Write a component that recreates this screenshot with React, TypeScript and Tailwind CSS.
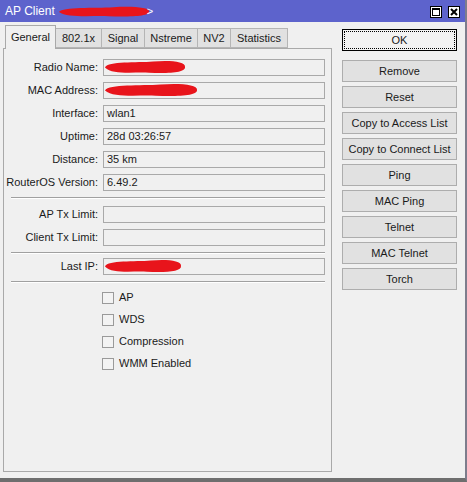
import React from "react";

const font = { fontFamily: '"Liberation Sans", Arial, sans-serif' };

function Scribble({ w, h }: { w: number; h: number }) {
  return (
    <svg width={w} height={h} viewBox={`0 0 ${w} ${h}`} className="block">
      <path
        d={`M1 ${h * 0.5} C ${w * 0.05} ${h * 0.05}, ${w * 0.4} ${h * 0.2}, ${w * 0.6} ${h * 0.1} C ${w * 0.8} ${h * 0.0}, ${w} ${h * 0.1}, ${w - 1} ${h * 0.45} C ${w} ${h * 0.85}, ${w * 0.8} ${h * 0.9}, ${w * 0.55} ${h * 0.85} C ${w * 0.35} ${h * 0.8}, ${w * 0.1} ${h}, 1 ${h * 0.5} Z`}
        fill="#e8141b"
      />
    </svg>
  );
}

function Field({ label, value, red }: { label: string; value?: string; red?: number }) {
  return (
    <div className="flex items-center h-[17px]">
      <div className="w-[95px] text-right pr-[1px] text-[11px] text-[#1a1a1a] whitespace-nowrap">{label}</div>
      <div className="ml-[4px] w-[222px] h-[17px] border border-[#a9a9a9] bg-[#f0f0f0] flex items-center pl-[3px] text-[11px] text-[#1a1a1a] relative overflow-hidden">
        {value}
        {red ? (
          <div className="absolute left-[0px] top-[0px]">
            <Scribble w={red} h={15} />
          </div>
        ) : null}
      </div>
    </div>
  );
}

function Sep() {
  return <div className="ml-[7px] w-[314px] border-t border-[#a0a0a0] border-b border-b-white" />;
}

function Check({ label }: { label: string }) {
  return (
    <div className="flex items-center h-[13px] pl-[98px]">
      <div className="w-[12px] h-[12px] border border-[#9a9a9a] bg-[#f3f3f3]" />
      <span className="ml-[5px] text-[11px] text-[#1a1a1a]">{label}</span>
    </div>
  );
}

function Btn({ label }: { label: string }) {
  return (
    <div className="w-[115px] h-[22px] border border-[#adadad] bg-[#e1e1e1] flex items-center justify-center text-[11px] text-[#1a1a1a]">
      {label}
    </div>
  );
}

export default function App() {
  const tabs = ["802.1x", "Signal", "Nstreme", "NV2", "Statistics"];
  const tabW = [46, 43, 53, 33, 57];
  return (
    <div style={font} className="w-[467px] h-[482px] bg-[#f0f0f0] border-r-2 border-r-[#7d7d8c] border-b-[4px] border-b-[#6e6e6e] flex flex-col overflow-hidden">
      {/* title bar */}
      <div className="h-[22px] bg-[#5d63cc] flex items-center pl-[5px] pr-[5px] relative">
        <span className="text-white text-[12px]">AP Client</span>
        <div className="ml-[3px] mt-[1px] flex items-center">
          <Scribble w={92} h={12} />
          <span className="text-white text-[11px] -ml-[3px]">&gt;</span>
        </div>
        <div className="ml-auto flex gap-[6px] mt-[2px]">
          <div className="w-[12px] h-[12px] bg-white border border-black flex items-center justify-center">
            <div className="w-[8px] h-[8px] border border-black border-t-2" />
          </div>
          <div className="w-[12px] h-[12px] bg-white border border-black flex items-center justify-center">
            <svg width="8" height="8" viewBox="0 0 8 8">
              <path d="M1 1 L7 7 M7 1 L1 7" stroke="black" strokeWidth="2" />
            </svg>
          </div>
        </div>
      </div>

      <div className="flex flex-1">
        {/* left */}
        <div className="ml-[3px] w-[329px] flex flex-col pt-[3px]">
          <div className="flex items-end h-[24px] relative z-10">
            <div className="w-[51px] ml-[2px] h-[24px] bg-[#f0f0f0] border border-[#a9a9a9] border-b-0 flex items-center justify-center text-[11px] text-[#1a1a1a]">
              General
            </div>
            {tabs.map((t, i) => (
              <div
                key={t}
                style={{ width: tabW[i] }}
                className="h-[20px] mb-[1px] bg-[#e1e1e1] border border-[#b5b5b5] border-l-0 flex items-center justify-center text-[11px] text-[#1a1a1a]"
              >
                {t}
              </div>
            ))}
          </div>
          <div className="-mt-[1px] h-[424px] border border-[#a9a9a9] bg-[#f0f0f0] flex flex-col pt-[10px]">
            <div className="flex flex-col gap-[6px]">
              <Field label="Radio Name:" red={82} />
              <Field label="MAC Address:" red={94} />
              <Field label="Interface:" value="wlan1" />
              <Field label="Uptime:" value="28d 03:26:57" />
              <Field label="Distance:" value="35 km" />
              <Field label="RouterOS Version:" value="6.49.2" />
            </div>
            <div className="mt-[6px]"><Sep /></div>
            <div className="mt-[7px] flex flex-col gap-[6px]">
              <Field label="AP Tx Limit:" />
              <Field label="Client Tx Limit:" />
            </div>
            <div className="mt-[6px]"><Sep /></div>
            <div className="mt-[4px]">
              <Field label="Last IP:" red={78} />
            </div>
            <div className="mt-[6px]"><Sep /></div>
            <div className="mt-[8px] flex flex-col gap-[9px]">
              <Check label="AP" />
              <Check label="WDS" />
              <Check label="Compression" />
              <Check label="WMM Enabled" />
            </div>
          </div>
        </div>

        {/* right */}
        <div className="ml-[10px] pt-[7px] flex flex-col gap-[4px]">
          <div className="w-[115px] h-[22px] border border-black bg-[#f2f2f2] p-[1px] mb-[5px]">
            <div className="w-full h-full border border-dotted border-black flex items-center justify-center text-[11px] text-[#1a1a1a]">
              OK
            </div>
          </div>
          <Btn label="Remove" />
          <Btn label="Reset" />
          <Btn label="Copy to Access List" />
          <Btn label="Copy to Connect List" />
          <Btn label="Ping" />
          <Btn label="MAC Ping" />
          <Btn label="Telnet" />
          <Btn label="MAC Telnet" />
          <Btn label="Torch" />
        </div>
      </div>
    </div>
  );
}
